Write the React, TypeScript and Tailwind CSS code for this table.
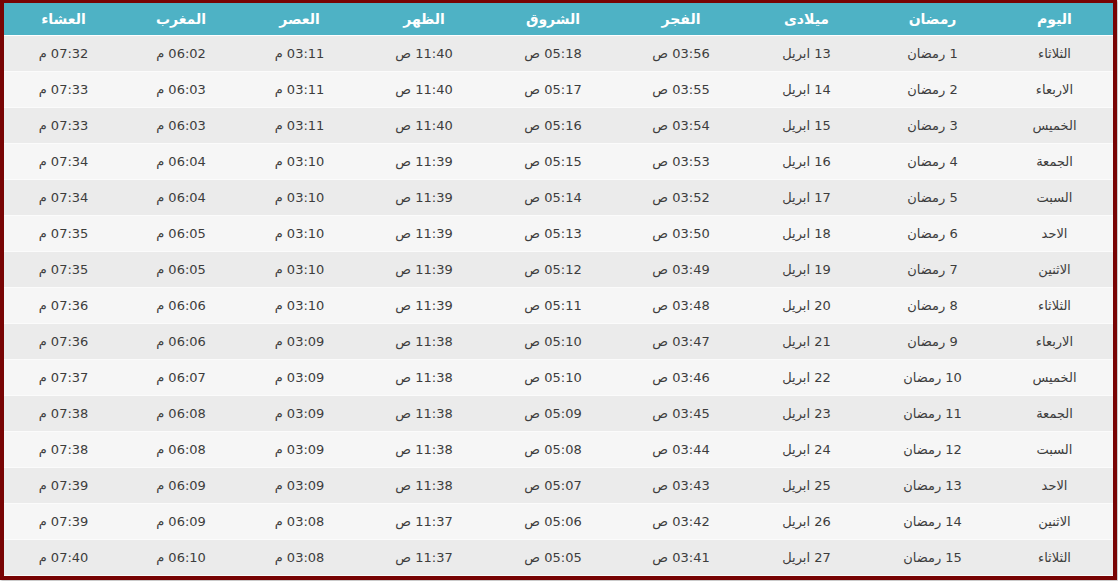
const days = ["الثلاثاء", "الاربعاء", "الخميس", "الجمعة", "السبت", "الاحد", "الاثنين"];

// fajr, shuruq, dhuhr, asr, maghrib, isha
const rows = [
  ["03:56", "05:18", "11:40", "03:11", "06:02", "07:32"],
  ["03:55", "05:17", "11:40", "03:11", "06:03", "07:33"],
  ["03:54", "05:16", "11:40", "03:11", "06:03", "07:33"],
  ["03:53", "05:15", "11:39", "03:10", "06:04", "07:34"],
  ["03:52", "05:14", "11:39", "03:10", "06:04", "07:34"],
  ["03:50", "05:13", "11:39", "03:10", "06:05", "07:35"],
  ["03:49", "05:12", "11:39", "03:10", "06:05", "07:35"],
  ["03:48", "05:11", "11:39", "03:10", "06:06", "07:36"],
  ["03:47", "05:10", "11:38", "03:09", "06:06", "07:36"],
  ["03:46", "05:10", "11:38", "03:09", "06:07", "07:37"],
  ["03:45", "05:09", "11:38", "03:09", "06:08", "07:38"],
  ["03:44", "05:08", "11:38", "03:09", "06:08", "07:38"],
  ["03:43", "05:07", "11:38", "03:09", "06:09", "07:39"],
  ["03:42", "05:06", "11:37", "03:08", "06:09", "07:39"],
  ["03:41", "05:05", "11:37", "03:08", "06:10", "07:40"],
];

const headers = ["اليوم", "رمضان", "ميلادى", "الفجر", "الشروق", "الظهر", "العصر", "المغرب", "العشاء"];

const cols = "grid grid-cols-[117px_127px_125px_126px_130px_128px_121px_116px_1fr]";

export default function App() {
  return (
    <div className="h-[581px] w-[1118px] bg-white font-['DejaVu_Sans',sans-serif]">
      <div className="h-[580px] w-[1117px] border-x-4 border-t-[3px] border-b-4 border-[#780404] shadow-[1px_1px_2px_rgba(0,0,0,0.3)]">
        <div dir="rtl" className={cols + " h-[33px] border-b border-white bg-[#4eb2c5] text-[14px] font-bold text-white"}>
          {headers.map((h) => (
            <div key={h} className="flex items-center justify-center">
              {h}
            </div>
          ))}
        </div>
        {rows.map((r, i) => (
          <div
            key={i}
            dir="rtl"
            className={
              cols +
              " h-[36px] border-b border-[#fbfbfb] text-[13px] text-[#3d3d3d] " +
              (i % 2 === 0 ? "bg-[#ebebeb]" : "bg-[#f6f6f6]")
            }
          >
            <div className="flex items-center justify-center">{days[i % 7]}</div>
            <div className="flex items-center justify-center">{i + 1} رمضان</div>
            <div className="flex items-center justify-center">{13 + i} ابريل</div>
            <div className="flex items-center justify-center">{r[0]} ص</div>
            <div className="flex items-center justify-center">{r[1]} ص</div>
            <div className="flex items-center justify-center">{r[2]} ص</div>
            <div className="flex items-center justify-center">{r[3]} م</div>
            <div className="flex items-center justify-center">{r[4]} م</div>
            <div className="flex items-center justify-center">{r[5]} م</div>
          </div>
        ))}
      </div>
    </div>
  );
}
